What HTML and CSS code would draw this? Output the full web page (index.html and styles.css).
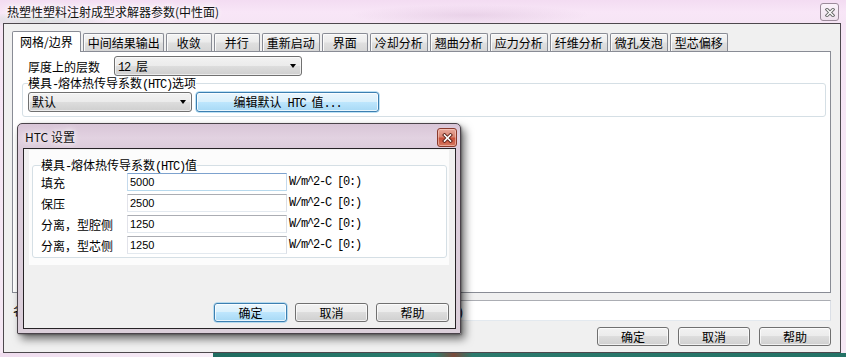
FILE: index.html
```html
<!DOCTYPE html>
<html lang="zh-CN">
<head>
<meta charset="utf-8">
<title>热塑性塑料注射成型求解器参数(中性面)</title>
<link rel="stylesheet" href="styles.css">
</head>
<body>
<div class="screen">
  <div class="mainwin">
    <div class="titlebar">
      <span class="title">热塑性塑料注射成型求解器参数(中性面)</span>
      <span class="close-inactive">
        <svg width="10" height="9" viewBox="0 0 10 9"><path d="M2 1.5 L8 7.5 M8 1.5 L2 7.5" stroke="#6a6a6a" stroke-width="3.2" stroke-linecap="square"/><path d="M2 1.5 L8 7.5 M8 1.5 L2 7.5" stroke="#fff" stroke-width="1.3" stroke-linecap="square"/></svg>
      </span>
    </div>
    <div class="client">
      <div class="tabs">
        <div class="tab active">网格/边界</div>
        <div class="tab tab-long">中间结果输出</div>
        <div class="tab">收敛</div>
        <div class="tab">并行</div>
        <div class="tab">重新启动</div>
        <div class="tab">界面</div>
        <div class="tab">冷却分析</div>
        <div class="tab">翘曲分析</div>
        <div class="tab">应力分析</div>
        <div class="tab">纤维分析</div>
        <div class="tab">微孔发泡</div>
        <div class="tab">型芯偏移</div>
      </div>
      <div class="panel">
        <div class="layers-row">
          <span class="layers-label">厚度上的层数</span>
          <div class="combo combo-layers"><span><span class="m sp">12</span>层</span><i class="arrow"></i></div>
        </div>
        <fieldset class="group htc-group">
          <legend>模具<span class="m">-</span>熔体热传导系数<span class="m">(HTC)</span>选项</legend>
          <div class="group-row">
            <div class="combo combo-default"><span>默认</span><i class="arrow"></i></div>
            <button class="btn btn-blue btn-edit">编辑默认<span class="m sp sl">HTC</span>值<span class="m">...</span></button>
          </div>
        </fieldset>
      </div>
      <div class="name-row">
        <span class="name-label">名称</span>
        <div class="name-field"><span class="m paren">)</span></div>
      </div>
      <div class="btn-row">
        <button class="btn">确定</button>
        <button class="btn">取消</button>
        <button class="btn">帮助</button>
      </div>
    </div>
  </div>
  <div class="desk">
    <div class="desk-left"></div>
    <div class="desk-right"></div>
  </div>

  <div class="dialog">
    <div class="dlg-title">
      <span class="dlg-caption">HTC 设置</span>
      <span class="close-red">
        <svg width="11" height="10" viewBox="0 0 11 10"><path d="M2.5 2 L8.5 8 M8.5 2 L2.5 8" stroke="#5a1f16" stroke-width="3.4" stroke-linecap="square"/><path d="M2.5 2 L8.5 8 M8.5 2 L2.5 8" stroke="#fff" stroke-width="1.6" stroke-linecap="square"/></svg>
      </span>
    </div>
    <div class="dlg-client">
      <div class="dlg-page">
        <fieldset class="group dlg-group">
          <legend>模具<span class="m">-</span>熔体热传导系数<span class="m">(HTC)</span>值</legend>
          <div class="frow"><span class="flbl">填充</span><div class="input input-focus">5000</div><span class="m unit">W/m^2-C [0:)</span></div>
          <div class="frow"><span class="flbl">保压</span><div class="input">2500</div><span class="m unit">W/m^2-C [0:)</span></div>
          <div class="frow"><span class="flbl">分离，型腔侧</span><div class="input">1250</div><span class="m unit">W/m^2-C [0:)</span></div>
          <div class="frow"><span class="flbl">分离，型芯侧</span><div class="input">1250</div><span class="m unit">W/m^2-C [0:)</span></div>
        </fieldset>
      </div>
      <div class="dlg-btns">
        <button class="btn btn-blue">确定</button>
        <button class="btn">取消</button>
        <button class="btn">帮助</button>
      </div>
    </div>
  </div>
</div>
</body>
</html>
```
FILE: styles.css
```css
* { box-sizing: border-box; }

html, body {
  margin: 0;
  padding: 0;
}

body {
  width: 846px;
  height: 357px;
  overflow: hidden;
  background: #f4e6f3;
  font-family: "Noto Sans CJK SC", "Noto Sans", sans-serif;
  font-size: 12px;
  color: #000;
}

/* SimSun-like narrow ASCII */
.m {
  font-family: "Liberation Mono", "Noto Sans CJK SC", monospace;
  font-size: 12px;
  letter-spacing: -1.2px;
  line-height: 10px;
}

.m.sp { margin-right: 6px; }
.m.sl { margin-left: 6px; }

.screen {
  position: relative;
  width: 846px;
  height: 357px;
}

/* ---------- main window ---------- */
.mainwin {
  height: 353px;
  display: flex;
  flex-direction: column;
  background:
    radial-gradient(ellipse 70px 8px at 40px 20px, rgba(150, 200, 170, 0.35), rgba(150, 200, 170, 0) 100%),
    radial-gradient(ellipse 120px 10px at 470px 15px, rgba(190, 150, 190, 0.25), rgba(190, 150, 190, 0) 100%),
    linear-gradient(180deg, #f3dcf2 0px, #f8e6f7 12px, #f6e5f5 23px, #f5e8f4 100%);
}

.titlebar {
  height: 23px;
  display: flex;
  justify-content: space-between;
  align-items: flex-start;
  padding: 0 7px 0 7px;
}

.title {
  margin-top: 4px;
  line-height: 15px;
  color: #111;
  text-shadow: 0 0 5px #fff, 0 0 9px #fff, 0 0 12px #fff;
}

.close-inactive {
  width: 19px;
  height: 18px;
  margin-top: 3px;
  border: 1px solid #9b8a9a;
  border-radius: 3px;
  background: linear-gradient(#fbf3fb, #efe1ee);
  display: flex;
  align-items: center;
  justify-content: center;
}

.client {
  height: 330px;
  margin: 0 5px 0 3px;
  border: 1px solid #4d484d;
  background: #f0f0f0;
  display: flex;
  flex-direction: column;
  padding: 7px 9px 0 8px;
}

.tabs {
  display: flex;
  align-items: flex-end;
  height: 20px;
  position: relative;
  z-index: 1;
}

.tab {
  height: 18px;
  min-width: 46px;
  padding: 0 4px;
  margin-right: 2px;
  border: 1px solid #898c95;
  border-bottom: none;
  border-radius: 2px 2px 0 0;
  background: linear-gradient(180deg, #f4f4f4 0%, #ececec 45%, #dfdfdf 55%, #d6d6d6 100%);
  box-shadow: inset 1px 1px 0 #fbfbfb;
  line-height: 17px;
  text-align: center;
  white-space: nowrap;
}

.tab.tab-long {
  padding: 0 3px 0 4px;
}

.tab.active {
  height: 21px;
  margin-bottom: -1px;
  padding: 0 7px;
  background: #fff;
  box-shadow: none;
  line-height: 19px;
}

.panel {
  height: 242px;
  background: #fff;
  border: 1px solid #898c95;
  padding: 4px 4px 0 9px;
}

.layers-row {
  display: flex;
  align-items: center;
  padding-left: 6px;
  height: 20px;
}

.layers-label {
  width: 86px;
}

.combo {
  height: 20px;
  border: 1px solid #707070;
  border-radius: 3px;
  background: linear-gradient(180deg, #f2f2f2 0%, #ebebeb 50%, #dddddd 50%, #cfcfcf 100%);
  box-shadow: inset 0 0 0 1px rgba(255, 255, 255, 0.6);
  display: flex;
  align-items: center;
  justify-content: space-between;
  padding: 0 5px 0 3px;
  line-height: 16px;
}

.combo-layers { width: 188px; }
.combo-default { width: 164px; }

.arrow {
  width: 0;
  height: 0;
  border-left: 3.5px solid transparent;
  border-right: 3.5px solid transparent;
  border-top: 4px solid #000;
}

.group {
  margin: 0;
  border: 1px solid #d5dfe5;
  border-radius: 3px;
  min-width: 0;
}

.group legend {
  padding: 0;
  line-height: 14px;
  height: 14px;
  margin-left: 0;
}

.htc-group {
  padding: 2px 5px 4px 5px;
}

.group-row {
  display: flex;
  gap: 4px;
}

.btn {
  height: 19px;
  width: 72px;
  padding: 0;
  border: 1px solid #707070;
  border-radius: 3px;
  background: linear-gradient(180deg, #f2f2f2 0%, #ebebeb 50%, #dddddd 50%, #cfcfcf 100%);
  box-shadow: inset 0 0 0 1px rgba(255, 255, 255, 0.7);
  font-family: "Noto Sans CJK SC", "Noto Sans", sans-serif;
  font-size: 12px;
  line-height: 16px;
  color: #000;
}

.btn-blue {
  border-color: #3c7fb1;
  background: linear-gradient(180deg, #eaf6fd 0%, #d9f0fc 50%, #bee6fd 50%, #a7d9f5 100%);
  box-shadow: inset 0 0 0 1px rgba(255, 255, 255, 0.75), 0 0 0 0.5px #7ec4ea;
}

.btn-edit {
  width: 183px;
  height: 20px;
}

.name-row {
  margin-top: 7px;
  height: 21px;
  display: flex;
  align-items: center;
}

.name-label {
  width: 32px;
  padding-left: 1px;
}

.name-field {
  flex: 1;
  height: 21px;
  border: 1px solid #abadb3;
  border-left-color: #e2e3ea;
  border-right-color: #dbdfe6;
  border-bottom-color: #e3e9ef;
  background: #fff;
  padding-left: 412px;
  line-height: 19px;
}

.paren {
  line-height: 19px;
}

.btn-row {
  margin-top: 6px;
  display: flex;
  justify-content: flex-end;
  gap: 9px;
}

/* ---------- desktop strip ---------- */
.desk {
  height: 4px;
  display: flex;
}

.desk-left {
  width: 213px;
  background: linear-gradient(90deg, #efdcee, #f7eef7);
}

.desk-right {
  flex: 1;
  background: linear-gradient(90deg, #1f6c60 0%, #2a7d6f 35%, #7a4a3a 38%, #2b7a6d 41%, #237266 100%);
}

/* ---------- HTC dialog (floating window) ---------- */
.dialog {
  position: absolute;
  left: 17px;
  top: 123px;
  width: 444px;
  height: 211px;
  border: 1px solid #4a434a;
  border-radius: 5px 5px 1px 1px;
  background: linear-gradient(180deg, #d8c5d7 0px, #e2d2e1 14px, #dcccdb 24px, #dbcfda 100%);
  box-shadow: 4px 5px 9px rgba(0, 0, 0, 0.55), 1px 1px 2px rgba(0, 0, 0, 0.3);
  display: flex;
  flex-direction: column;
  z-index: 5;
}

.dlg-title {
  height: 24px;
  display: flex;
  justify-content: space-between;
  align-items: flex-start;
  padding-left: 7px;
}

.dlg-caption {
  margin-top: 5px;
  line-height: 15px;
  color: #111;
  text-shadow: 0 0 5px #fff, 0 0 8px #fff;
}

.close-red {
  width: 20px;
  height: 19px;
  margin-top: 4px;
  margin-right: 3px;
  border: 1px solid #8a3a2c;
  border-radius: 3px;
  background: linear-gradient(180deg, #e8a99c 0%, #d98573 45%, #c8503a 55%, #d4775f 100%);
  box-shadow: inset 0 0 0 1px rgba(255, 220, 210, 0.5);
  display: flex;
  align-items: center;
  justify-content: center;
}

.dlg-client {
  height: 181px;
  margin: 0 4px 0 5px;
  border: 1px solid #262326;
  background: #f0f0f0;
  display: flex;
  flex-direction: column;
}

.dlg-page {
  margin: 1px 6px 0 5px;
  height: 115px;
  background: #fcfcfc;
  padding: 8px 2px 0 3px;
}

.dlg-group {
  background: #fff;
  padding: 1px 8px 3px 8px;
}

.frow {
  display: flex;
  align-items: center;
  height: 18px;
  margin-bottom: 3px;
}

.frow:last-child { margin-bottom: 0; }

.flbl {
  width: 86px;
}

.input {
  width: 160px;
  height: 18px;
  border: 1px solid #abadb3;
  border-left-color: #e2e3ea;
  border-right-color: #dbdfe6;
  border-bottom-color: #e3e9ef;
  background: #fff;
  font-family: "Liberation Sans", Arial, sans-serif;
  font-size: 11px;
  line-height: 16px;
  padding-left: 2px;
}

.input-focus {
  border-color: #7da2ce;
  border-left-color: #c5daed;
  border-right-color: #c5daed;
  border-bottom-color: #b7d9ed;
}

.unit {
  margin-left: 2px;
  line-height: 16px;
}

.dlg-btns {
  margin-top: auto;
  padding: 0 6px 6px 0;
  display: flex;
  justify-content: flex-end;
  gap: 8px;
}

.dlg-btns .btn {
  width: 73px;
}
```
